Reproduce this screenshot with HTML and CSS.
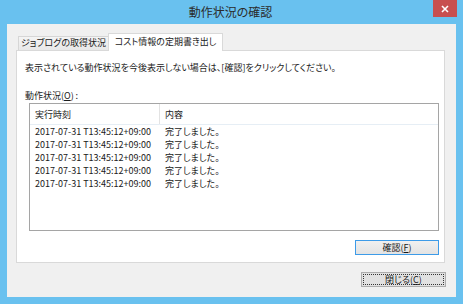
FILE: index.html
```html
<!DOCTYPE html>
<html lang="ja">
<head>
<meta charset="utf-8">
<link rel="stylesheet" href="styles.css">
</head>
<body>
<div class="window">
  <div class="titlebar">
    <span class="title">動作状況の確認</span>
    <span class="close"><svg width="8" height="8" viewBox="0 0 8 8"><path d="M1 1L7 7M7 1L1 7" stroke="#fff" stroke-width="1.6"/></svg></span>
  </div>
  <div class="client">
    <div class="tabs">
      <div class="tab">ジョブログの取得状況</div>
      <div class="tab active">コスト情報の定期書き出し</div>
    </div>
    <div class="panel">
      <p class="msg">表示されている動作状況を今後表示しない場合は、[確認]をクリックしてください。</p>
      <p class="label">動作状況(<u>O</u>)&thinsp;:</p>
      <div class="list">
        <div class="row head"><span class="c1">実行時刻</span><span class="c2">内容</span></div>
        <div class="row"><span class="c1">2017-07-31 T13:45:12+09:00</span><span class="c2">完了しました。</span></div>
        <div class="row"><span class="c1">2017-07-31 T13:45:12+09:00</span><span class="c2">完了しました。</span></div>
        <div class="row"><span class="c1">2017-07-31 T13:45:12+09:00</span><span class="c2">完了しました。</span></div>
        <div class="row"><span class="c1">2017-07-31 T13:45:12+09:00</span><span class="c2">完了しました。</span></div>
        <div class="row"><span class="c1">2017-07-31 T13:45:12+09:00</span><span class="c2">完了しました。</span></div>
      </div>
      <div class="actions"><button class="btn default">確認(<u>F</u>)</button></div>
    </div>
    <div class="footer"><button class="btn focus">閉じる(<u>C</u>)</button></div>
  </div>
</div>
</body>
</html>
```

FILE: styles.css
```css
* { box-sizing: border-box; }
html, body { margin: 0; padding: 0; }
body {
  font-family: "Noto Sans CJK JP", "Noto Sans", sans-serif;
  font-feature-settings: "palt";
  color: #1a1a1a;
  background: #69c1ef;
}
.window {
  width: 463px;
  height: 304px;
  background: #69c1ef;
  padding: 0 7px 7px 7px;
  display: flex;
  flex-direction: column;
}
.titlebar {
  height: 24px;
  position: relative;
  display: flex;
  justify-content: center;
  align-items: center;
}
.title {
  font-size: 12px;
  line-height: 14px;
  color: #2b2b2b;
  margin-top: -1px;
  margin-left: -2px;
}
.close {
  position: absolute;
  right: -1px;
  top: 0;
  width: 24px;
  height: 17px;
  background: #c84f4f;
  display: flex;
  align-items: center;
  justify-content: center;
}
.client {
  flex: 1;
  background: #f0f0f0;
  padding: 9px 11px 0 9px;
  display: flex;
  flex-direction: column;
}
.tabs {
  display: flex;
  align-items: flex-end;
  height: 18px;
  margin-bottom: -1px;
  position: relative;
  z-index: 1;
  padding-left: 2px;
}
.tab {
  font-size: 9px;
  line-height: 12px;
  height: 14px;
  width: 91px;
  margin-bottom: 1px;
  border: 1px solid #d6d6d6;
  border-bottom: none;
  background: linear-gradient(#f4f4f4, #e8e8e8);
  text-align: center;
  white-space: nowrap;
}
.tab.active {
  width: 115px;
  height: 18px;
  margin-bottom: 0;
  margin-left: -1px;
  background: #fff;
  border-color: #d9d9d9;
  line-height: 15px;
}
.panel {
  height: 213px;
  background: #fff;
  border: 1px solid #d9d9d9;
  padding: 11px 0 0 8px;
  display: flex;
  flex-direction: column;
}
.msg, .label {
  margin: 0;
  font-size: 9px;
  line-height: 12px;
  white-space: nowrap;
}
.label { margin-top: 16px; }
.list {
  margin: 1px 5px 0 4px;
  height: 128px;
  border: 1px solid #a5a5a5;
  background: #fff;
}
.row {
  display: flex;
  font-size: 9px;
  height: 13px;
  line-height: 13px;
  white-space: nowrap;
}
.row.head {
  height: 21px;
  line-height: 21px;
  border-bottom: 1px solid #e6eef5;
}
.c1 { width: 130px; flex-shrink: 0; overflow: hidden; padding-left: 5px; }
.c2 { padding-left: 5px; }
.row.head .c1 { border-right: 1px solid #e3e3e3; }
.actions {
  display: flex;
  justify-content: flex-end;
  margin: 9px 5px 0 0;
}
.btn {
  font-family: inherit;
  font-feature-settings: "palt";
  font-size: 9px;
  line-height: 11px;
  height: 15px;
  padding: 0;
  color: #1a1a1a;
  background: linear-gradient(#f0f0f0, #e3e3e3);
}
.btn.default {
  width: 84px;
  border: 1px solid #3d9be8;
}
.footer {
  display: flex;
  justify-content: flex-end;
  margin-top: 9px;
}
.btn.focus {
  width: 85px;
  margin-right: -1px;
  border: 1px solid #acacac;
  outline: 1px dotted #333;
  outline-offset: -3px;
  background: #e1e1e1;
}
u { text-decoration: underline; }
```
